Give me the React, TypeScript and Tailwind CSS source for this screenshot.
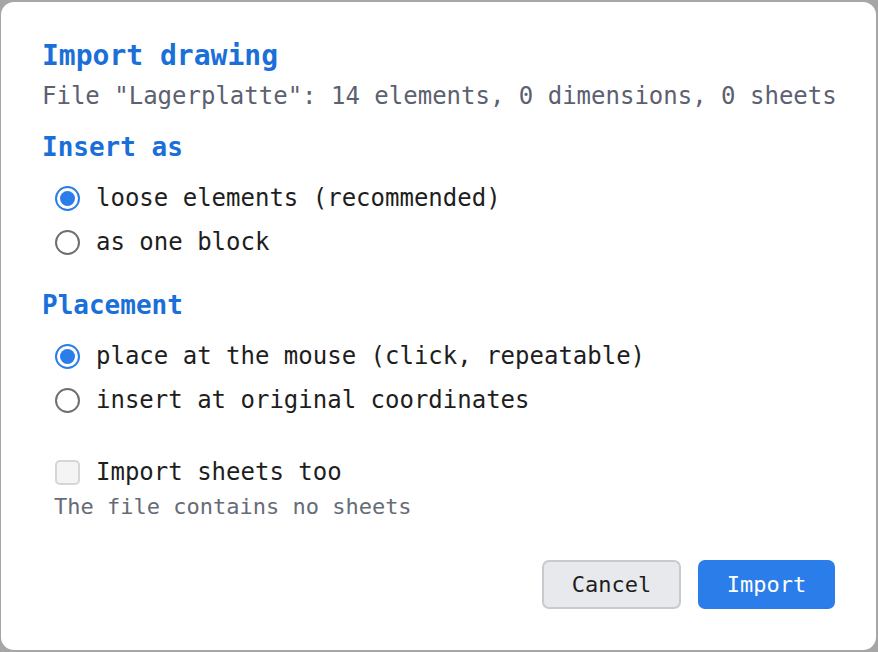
import { useState } from "react";

const mono = "font-['DejaVu_Sans_Mono',monospace]";

function Radio({ checked, label, onClick }: { checked: boolean; label: string; onClick: () => void }) {
  return (
    <button type="button" onClick={onClick} className="flex h-[36px] items-center gap-[16px] pl-[13px] text-left">
      <span
        className={`flex h-[25px] w-[25px] shrink-0 items-center justify-center rounded-full border-2 ${
          checked ? "border-[#2b7de9]" : "border-[#6f6f6f]"
        }`}
      >
        {checked && <span className="h-[15px] w-[15px] rounded-full bg-[#2b7de9]" />}
      </span>
      <span className="text-[24px] leading-[36px] text-[#1e1e1e]">{label}</span>
    </button>
  );
}

export default function App() {
  const [insertAs, setInsertAs] = useState("loose");
  const [placement, setPlacement] = useState("mouse");

  return (
    <div className={`h-[652px] w-[878px] bg-[#a6a6a6] pl-[1px] pt-[2px] ${mono}`}>
      <div className="flex h-[648px] w-[875px] flex-col rounded-[13px] bg-white pl-[41px] pr-[41px] pt-[37px]">
        <h1 className="text-[28px] font-bold leading-[34px] text-[#1b6fd9]">Import drawing</h1>
        <p className="mt-[8px] whitespace-nowrap text-[24px] leading-[30px] text-[#5c6070]">
          File "Lagerplatte": 14 elements, 0 dimensions, 0 sheets
        </p>

        <h2 className="mt-[20px] text-[26px] font-bold leading-[32px] text-[#1b6fd9]">Insert as</h2>
        <div className="mt-[17px] flex flex-col gap-[8px]">
          <Radio checked={insertAs === "loose"} label="loose elements (recommended)" onClick={() => setInsertAs("loose")} />
          <Radio checked={insertAs === "block"} label="as one block" onClick={() => setInsertAs("block")} />
        </div>

        <h2 className="mt-[29px] text-[26px] font-bold leading-[32px] text-[#1b6fd9]">Placement</h2>
        <div className="mt-[17px] flex flex-col gap-[8px]">
          <Radio
            checked={placement === "mouse"}
            label="place at the mouse (click, repeatable)"
            onClick={() => setPlacement("mouse")}
          />
          <Radio
            checked={placement === "original"}
            label="insert at original coordinates"
            onClick={() => setPlacement("original")}
          />
        </div>

        <div className="mt-[36px] flex h-[36px] items-center gap-[16px] pl-[13px]">
          <span className="h-[25px] w-[25px] shrink-0 rounded-[5px] border-2 border-[#d6d6d6] bg-[#f4f4f4]" />
          <span className="text-[24px] leading-[36px] text-[#1e1e1e]">Import sheets too</span>
        </div>
        <p className="mt-[4px] pl-[12px] text-[22px] leading-[26px] text-[#666b78]">The file contains no sheets</p>

        <div className="mt-[40px] flex justify-end gap-[17px]">
          <button
            type="button"
            className="h-[49px] w-[139px] rounded-[7px] border-2 border-[#c8cad0] bg-[#e8e9ed] text-[22px] text-[#1e1e1e]"
          >
            Cancel
          </button>
          <button type="button" className="h-[49px] w-[137px] rounded-[7px] bg-[#2b7de9] text-[22px] text-white">
            Import
          </button>
        </div>
      </div>
    </div>
  );
}
